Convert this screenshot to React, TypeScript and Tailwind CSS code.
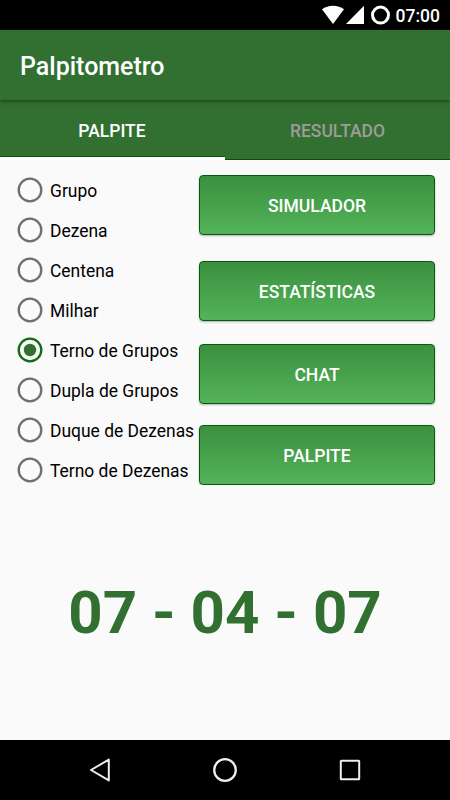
import React, { useState } from "react";

const options = [
  "Grupo",
  "Dezena",
  "Centena",
  "Milhar",
  "Terno de Grupos",
  "Dupla de Grupos",
  "Duque de Dezenas",
  "Terno de Dezenas",
];

function StatusBar() {
  return (
    <div className="flex h-[30px] shrink-0 items-center justify-end bg-black pr-[10px] text-white">
      <svg width="74" height="30" viewBox="0 0 74 30" fill="none" className="mr-px shrink-0">
        <path d="M1 9.2C4 7 8 5.7 12 5.7S20 7 23 9.2L12 24Z" fill="white" />
        <path d="M43 5.8V24H25Z" fill="white" />
        <circle cx="59.5" cy="15.1" r="8" stroke="white" strokeWidth="3" />
      </svg>
      <span className="text-[17.5px] font-medium leading-[30px] pt-[1px]">07:00</span>
    </div>
  );
}

function Radio({ label, checked, onSelect }: { label: string; checked: boolean; onSelect: () => void }) {
  return (
    <button role="radio" aria-checked={checked} onClick={onSelect} className="flex h-10 shrink-0 items-center whitespace-nowrap text-left">
      <svg width="26" height="26" viewBox="0 0 26 26" fill="none" className="mr-[7px] shrink-0">
        <circle cx="13" cy="13" r="11.3" stroke={checked ? "#0f6a10" : "#6e6e6e"} strokeWidth="2.3" />
        {checked && <circle cx="13" cy="13" r="6.2" fill="#317031" />}
      </svg>
      <span className="pt-[1px] text-[17.45px] leading-5 text-black">{label}</span>
    </button>
  );
}

function ActionButton({ label }: { label: string }) {
  return (
    <button className="h-[60px] w-full rounded-[4px] border border-[#065c0a] bg-linear-to-b from-[#3a903e] to-[#54b359] pt-[3px] text-[17.5px] font-medium text-white shadow-[0_1px_2px_rgba(0,0,0,0.3)]">
      {label}
    </button>
  );
}

export default function App() {
  const [selected, setSelected] = useState(4);
  return (
    <div className="flex h-[800px] w-[450px] flex-col overflow-hidden bg-[#fafafa] font-['Roboto',sans-serif]">
      <StatusBar />
      <header className="z-10 flex h-[70px] shrink-0 items-center bg-[#317031] pl-5 pt-[3px] shadow-[0_1px_4px_rgba(0,0,0,0.5)]">
        <h1 className="text-[25px] font-medium leading-none text-white">Palpitometro</h1>
      </header>
      <nav className="flex h-[60px] shrink-0 bg-[#317031] text-[17.5px] font-medium">
        <div className="flex w-[225px] flex-col">
          <button className="h-[57px] border-b border-[#075c07] pr-px pt-[6px] text-white">PALPITE</button>
          <div className="h-[3px] bg-white" />
        </div>
        <button className="h-[60px] w-[225px] border-b border-[#075007] pt-[4px] text-[#a09b98]">RESULTADO</button>
      </nav>
      <main className="flex h-[325px] shrink-0 items-start overflow-hidden">
        <div role="radiogroup" className="flex w-[199px] flex-col pl-[17px] pt-[10px]">
          {options.map((label, i) => (
            <Radio key={label} label={label} checked={selected === i} onSelect={() => setSelected(i)} />
          ))}
        </div>
        <div className="w-[236px] pt-[15px]">
          <ActionButton label="SIMULADOR" />
          <div className="pt-[26px]"><ActionButton label="ESTATÍSTICAS" /></div>
          <div className="pt-[23px]"><ActionButton label="CHAT" /></div>
          <div className="pt-[21px]"><ActionButton label="PALPITE" /></div>
        </div>
      </main>
      <section className="flex flex-1 items-center justify-center pt-px">
        <p className="whitespace-nowrap text-[60px] font-bold leading-none text-[#317031]">07 - 04 - 07</p>
      </section>
      <footer className="flex h-[60px] shrink-0 items-center justify-center bg-black">
        <svg width="310" height="60" viewBox="0 0 310 60" fill="none" stroke="#eeeeee" strokeWidth="2" strokeLinejoin="round">
          <path d="M38.8 19.6V40.4L21 30Z" />
          <circle cx="155" cy="30" r="10.8" strokeWidth="2.3" />
          <rect x="270.8" y="20.8" width="18.4" height="18.4" rx="0.5" />
        </svg>
      </footer>
    </div>
  );
}
